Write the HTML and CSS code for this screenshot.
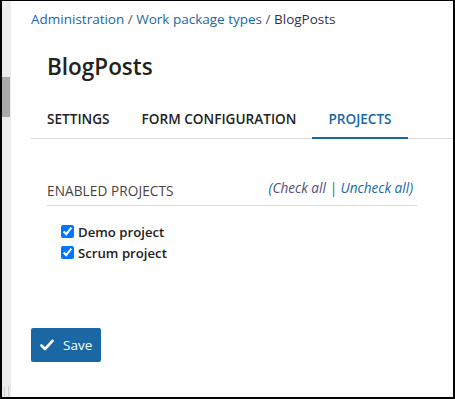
FILE: index.html
```html
<!DOCTYPE html>
<html lang="en">
<head>
  <meta charset="UTF-8">
  <title>BlogPosts - Work package types</title>
  <link rel="stylesheet" href="styles.css">
</head>
<body>
  <div class="frame">
    <div class="gutter">
      <div class="thumb"></div>
      <div class="grip"></div>
    </div>
    <div class="content">
      <div class="breadcrumb">
        <a href="#">Administration</a> / <a href="#">Work package types</a> / <span class="current">BlogPosts</span>
      </div>

      <h2 class="title">BlogPosts</h2>

      <div class="tabs">
        <a class="tab" href="#">SETTINGS</a>
        <a class="tab" href="#">FORM CONFIGURATION</a>
        <a class="tab active" href="#">PROJECTS</a>
      </div>

      <div class="section">
        <div class="section-head">
          <span class="section-title">ENABLED PROJECTS</span>
          <span class="toggles">(<a class="visited" href="#">Check all</a> | <a href="#">Uncheck all</a>)</span>
        </div>
        <label class="project"><input type="checkbox" checked> Demo project</label>
        <label class="project"><input type="checkbox" checked> Scrum project</label>
      </div>

      <button class="save-button">
        <svg width="14" height="12" viewBox="0 0 14 12"><path d="M1.5 6.5 L5 10 L12.5 1.8" fill="none" stroke="#fff" stroke-width="2.6" stroke-linecap="round" stroke-linejoin="round"/></svg>
        Save
      </button>
    </div>
  </div>
</body>
</html>
```

FILE: styles.css
```css
* {
  margin: 0;
  padding: 0;
  box-sizing: border-box;
}
body {
  font-family: 'Open Sans', sans-serif;
  background-color: white;
  color: #222;
}
.frame {
  display: flex;
  width: 455px;
  height: 399px;
  border-style: solid;
  border-color: black;
  border-width: 1px 2px 2px 2px;
  overflow: hidden;
}
.gutter {
  width: 9px;
  background-color: #ebebeb;
  display: flex;
  flex-direction: column;
  align-items: flex-start;
}
.thumb {
  width: 8px;
  height: 40px;
  margin-top: 76px;
  background-color: #a9a9a9;
}
.grip {
  width: 5px;
  height: 11px;
  margin-top: auto;
  margin-left: 2px;
  border-left: 1px solid #d0d0d0;
  border-right: 1px solid #d0d0d0;
}
.content {
  flex: 1;
  padding-left: 20px;
}
a {
  color: #1a67a3;
  text-decoration: none;
}
.breadcrumb {
  font-size: 13.5px;
  color: #555;
  margin-top: 8px;
  height: 20px;
  line-height: 20px;
}
.breadcrumb .current {
  color: #3a2f3f;
}
.title {
  font-size: 22.5px;
  font-weight: 600;
  color: #222;
  margin: 23px 0 0 16px;
  line-height: 30px;
}
.tabs {
  display: flex;
  margin-top: 21px;
  border-bottom: 1px solid #ddd;
}
.tab {
  color: #222;
  font-size: 13.6px;
  font-weight: 600;
  padding: 0 16px;
  height: 36px;
  line-height: 31px;
  border-bottom: 2px solid transparent;
  margin-bottom: -1px;
}
.tab.active {
  color: #1a67a3;
  border-bottom-color: #1a67a3;
}
.section {
  margin: 42px 36px 0 16px;
}
.section-head {
  display: flex;
  justify-content: space-between;
  align-items: baseline;
  border-bottom: 1px solid #ddd;
  padding-bottom: 5px;
}
.section-title {
  font-size: 13.6px;
  color: #4a4141;
  letter-spacing: 0.1px;
}
.toggles {
  font-size: 13.6px;
  font-style: italic;
  color: #1a67a3;
  margin-right: 4px;
  position: relative;
  top: -3px;
}
.toggles .visited {
  color: #524d7a;
}
.project {
  display: flex;
  align-items: center;
  gap: 4px;
  font-size: 13.2px;
  font-weight: 600;
  color: #222;
  margin-left: 14px;
  height: 21px;
}
.section-head + .project {
  margin-top: 15px;
}
.project input {
  width: 13px;
  height: 13px;
  margin: 0;
}
.save-button {
  display: flex;
  align-items: center;
  gap: 9px;
  margin-top: 65px;
  height: 34px;
  width: 70px;
  padding-left: 9px;
  border: none;
  border-radius: 2px;
  background-color: #1b67a4;
  color: white;
  font-family: 'Open Sans', sans-serif;
  font-size: 13.5px;
  cursor: pointer;
}
```
